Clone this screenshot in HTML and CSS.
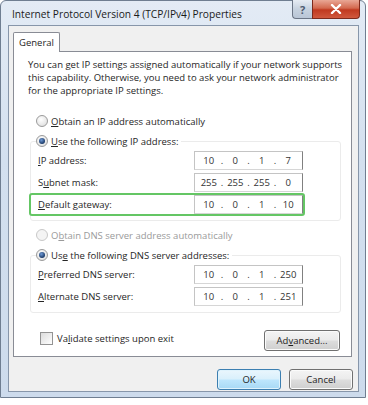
FILE: index.html
```html
<html>

<head>
  <title>Internet Protocol Version 4 (TCP/IPv4) Properties</title>
  <link rel="stylesheet" href="styles.css">
</head>

<body>
  <div class="window">

    <div class="titlebar">
      <span class="title">Internet Protocol Version 4 (TCP/IPv4) Properties</span>
      <div class="caption-btns">
        <span class="cap help">?</span>
        <span class="cap close">
          <svg width="12" height="10" viewBox="0 0 12 10">
            <path d="M2 1 L10 9 M10 1 L2 9" stroke="#fff" stroke-width="2.4" stroke-linecap="round" />
          </svg>
        </span>
      </div>
    </div>

    <div class="client">
      <div class="tabs">
        <div class="tab">General</div>
      </div>

      <div class="panel">
        <p class="intro">You can get IP settings assigned automatically if your network supports
          this capability. Otherwise, you need to ask your network administrator
          for the appropriate IP settings.</p>

        <div class="option first">
          <span class="radio"></span>
          <span><u>O</u>btain an IP address automatically</span>
        </div>

        <div class="group">
          <div class="legend">
            <span class="radio on"></span>
            <span><u>U</u>se the following IP address:</span>
          </div>
          <div class="field-row">
            <span><u>I</u>P address:</span>
            <div class="ip"><b>10</b><i>.</i><b>0</b><i>.</i><b>1</b><i>.</i><b>7</b></div>
          </div>
          <div class="field-row">
            <span>S<u>u</u>bnet mask:</span>
            <div class="ip"><b>255</b><i>.</i><b>255</b><i>.</i><b>255</b><i>.</i><b>0</b></div>
          </div>
          <div class="field-row marked">
            <span><u>D</u>efault gateway:</span>
            <div class="ip"><b>10</b><i>.</i><b>0</b><i>.</i><b>1</b><i>.</i><b>10</b></div>
          </div>
        </div>

        <div class="option disabled">
          <span class="radio"></span>
          <span>O<u>b</u>tain DNS server address automatically</span>
        </div>

        <div class="group dns">
          <div class="legend">
            <span class="radio on"></span>
            <span>Us<u>e</u> the following DNS server addresses:</span>
          </div>
          <div class="field-row">
            <span><u>P</u>referred DNS server:</span>
            <div class="ip"><b>10</b><i>.</i><b>0</b><i>.</i><b>1</b><i>.</i><b>250</b></div>
          </div>
          <div class="field-row">
            <span><u>A</u>lternate DNS server:</span>
            <div class="ip"><b>10</b><i>.</i><b>0</b><i>.</i><b>1</b><i>.</i><b>251</b></div>
          </div>
        </div>

        <div class="panel-foot">
          <label class="check">
            <span class="box"></span>
            <span>Va<u>l</u>idate settings upon exit</span>
          </label>
          <button class="btn advanced">Ad<u>v</u>anced...</button>
        </div>
      </div>

      <div class="dialog-btns">
        <button class="btn default">OK</button>
        <button class="btn">Cancel</button>
      </div>
    </div>

  </div>
</body>

</html>
```

FILE: styles.css
```css
body {
  margin: 0;
  background: #ffffff;
  font-family: "Open Sans", "Noto Sans", sans-serif;
  font-size: 9.5px;
  color: #262626;
}

u {
  text-decoration: underline;
  text-underline-offset: 1px;
}

.window {
  width: 364px;
  height: 396px;
  border: 1px solid #6f7e91;
  border-radius: 6px 6px 0 0;
  background: linear-gradient(180deg, #e3ebf5 0%, #d3e0ef 40%, #cddbec 100%);
  display: flex;
  flex-direction: column;
}

/* title bar */

.titlebar {
  height: 24px;
  display: flex;
  justify-content: space-between;
  align-items: flex-start;
}

.title {
  font-size: 10.2px;
  padding: 6px 0 0 11px;
  color: #1a1a1a;
}

.caption-btns {
  display: flex;
  margin-right: 5px;
  margin-top: -1px;
}

.cap {
  height: 18px;
  display: flex;
  align-items: center;
  justify-content: center;
  border: 1px solid #6c7686;
  border-top: none;
}

.help {
  width: 19px;
  border-right: none;
  border-radius: 0 0 0 4px;
  background: linear-gradient(180deg, #e6ecf3, #c7d2df 50%, #b9c6d6);
  color: #4d5b70;
  font-size: 11px;
  font-weight: bold;
}

.close {
  width: 46px;
  border-color: #7d2a1c;
  border-radius: 0 0 4px 0;
  background: linear-gradient(180deg, #e9a795, #d3694f 45%, #c0391f 55%, #d0583d);
}

/* client area */

.client {
  flex: 1;
  margin: 0 6px 5px 7px;
  border: 1px solid #8796aa;
  background: #f0f0f0;
  display: flex;
  flex-direction: column;
}

.tabs {
  display: flex;
  padding: 6px 0 0 4px;
}

.tab {
  width: 45px;
  height: 19px;
  line-height: 19px;
  text-align: center;
  background: #ffffff;
  border: 1px solid #898c95;
  border-bottom: none;
  border-radius: 2px 2px 0 0;
  margin-bottom: -1px;
  position: relative;
}

.panel {
  margin-left: 4px;
  width: 337px;
  height: 304px;
  border: 1px solid #898c95;
  background: #ffffff;
}

.intro {
  margin: 6px 0 0 14px;
  width: 318px;
  line-height: 13px;
}

.option {
  display: flex;
  align-items: center;
  gap: 3px;
  height: 16px;
  margin-left: 22px;
}

.option.first {
  margin-top: 16px;
}

.option.disabled {
  margin-top: 6px;
  color: #9a9a9a;
}

.option.disabled .radio {
  border-color: #c8c8c8;
  background: #f4f4f4;
}

.radio {
  width: 10px;
  height: 10px;
  border-radius: 50%;
  border: 1px solid #9a9a9a;
  background: radial-gradient(circle at 40% 35%, #ffffff, #d9d9d9);
  display: flex;
  align-items: center;
  justify-content: center;
}

.radio.on::after {
  content: "";
  width: 6px;
  height: 6px;
  border-radius: 50%;
  background: radial-gradient(circle at 40% 35%, #6f9ad6, #1b3a68 70%);
}

/* group boxes */

.group {
  margin: 12px 10px 0 16px;
  border: 1px solid #ebebeb;
  border-radius: 3px;
  padding-bottom: 6px;
}

.group.dns {
  margin-top: 12px;
}

.legend {
  display: inline-flex;
  align-items: center;
  gap: 3px;
  height: 16px;
  margin: -9px 0 0 5px;
  padding-right: 3px;
  background: #ffffff;
  vertical-align: top;
}

.field-row {
  display: grid;
  grid-template-columns: 1fr 109px;
  align-items: center;
  height: 19px;
  margin: 3px 37px 0 0;
  padding-left: 7px;
}

.legend + .field-row {
  margin-top: 2px;
}

.field-row.marked {
  outline: 2px solid #64c664;
  outline-offset: 0;
  border-radius: 1px;
}

.ip {
  height: 17px;
  border: 1px solid #c4c4c4;
  border-right-color: #808080;
  border-bottom-color: #d6d6d6;
  background: #ffffff;
  display: flex;
  align-items: center;
  padding: 0 4px;
  color: #333333;
}

.ip b {
  font-weight: normal;
  width: 20px;
  text-align: center;
}

.ip i {
  font-style: normal;
  width: 7px;
  text-align: center;
}

/* footer */

.panel-foot {
  display: flex;
  justify-content: space-between;
  align-items: center;
  margin: 17px 11px 0 26px;
}

.check {
  display: flex;
  align-items: center;
  gap: 4px;
  margin-top: -4px;
}

.box {
  width: 11px;
  height: 11px;
  border: 1px solid #939393;
  background: linear-gradient(135deg, #dcdcdc, #ffffff);
}

.btn {
  font-family: inherit;
  font-size: 9.5px;
  color: #1e1e1e;
  height: 21px;
  padding: 0;
  border: 1px solid #707070;
  border-radius: 3px;
  background: linear-gradient(180deg, #f4f4f4 0%, #ebebeb 48%, #dddddd 52%, #cfcfcf 100%);
  box-shadow: inset 0 0 0 1px #fbfbfb;
}

.advanced {
  width: 76px;
}

.dialog-btns {
  display: flex;
  justify-content: flex-end;
  gap: 8px;
  margin: 12px 5px 0 0;
}

.dialog-btns .btn {
  width: 64px;
}

.btn.default {
  border-color: #3c7fb1;
  background: linear-gradient(180deg, #eaf6fd 0%, #d9f0fc 48%, #bee6fd 52%, #a7d9f5 100%);
  box-shadow: inset 0 0 0 1px #dff3fd;
}
```
